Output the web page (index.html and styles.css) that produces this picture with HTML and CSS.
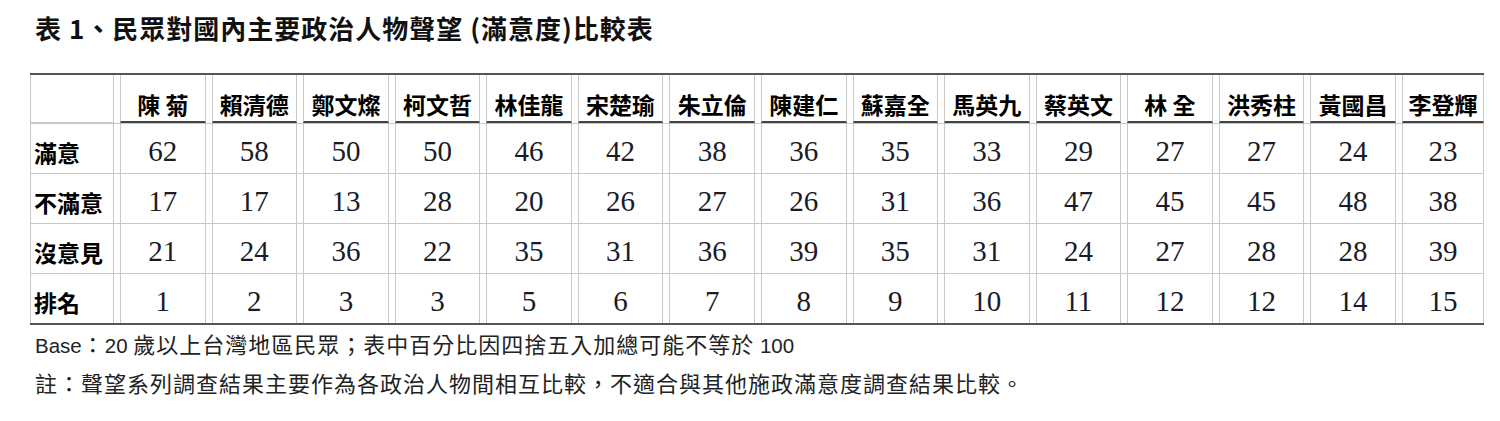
FILE: index.html
```html
<!DOCTYPE html>
<html lang="zh-Hant">
<head>
<meta charset="utf-8">
<title>民眾對國內主要政治人物聲望比較表</title>
<link rel="stylesheet" href="styles.css">
</head>
<body>
<div class="page">
  <h1 class="title">表 1、民眾對國內主要政治人物聲望 (滿意度)比較表</h1>
  <div class="tbl">
    <div class="row head">
      <div class="c lab"></div>
      <div class="c name">陳 菊</div>
      <div class="c name">賴清德</div>
      <div class="c name">鄭文燦</div>
      <div class="c name">柯文哲</div>
      <div class="c name">林佳龍</div>
      <div class="c name">宋楚瑜</div>
      <div class="c name">朱立倫</div>
      <div class="c name">陳建仁</div>
      <div class="c name">蘇嘉全</div>
      <div class="c name">馬英九</div>
      <div class="c name">蔡英文</div>
      <div class="c name">林 全</div>
      <div class="c name">洪秀柱</div>
      <div class="c name">黃國昌</div>
      <div class="c name">李登輝</div>
    </div>
    <div class="row data">
      <div class="c lab">滿意</div>
      <div class="c num">62</div><div class="c num">58</div><div class="c num">50</div><div class="c num">50</div><div class="c num">46</div>
      <div class="c num">42</div><div class="c num">38</div><div class="c num">36</div><div class="c num">35</div><div class="c num">33</div>
      <div class="c num">29</div><div class="c num">27</div><div class="c num">27</div><div class="c num">24</div><div class="c num">23</div>
    </div>
    <div class="row data">
      <div class="c lab">不滿意</div>
      <div class="c num">17</div><div class="c num">17</div><div class="c num">13</div><div class="c num">28</div><div class="c num">20</div>
      <div class="c num">26</div><div class="c num">27</div><div class="c num">26</div><div class="c num">31</div><div class="c num">36</div>
      <div class="c num">47</div><div class="c num">45</div><div class="c num">45</div><div class="c num">48</div><div class="c num">38</div>
    </div>
    <div class="row data">
      <div class="c lab">沒意見</div>
      <div class="c num">21</div><div class="c num">24</div><div class="c num">36</div><div class="c num">22</div><div class="c num">35</div>
      <div class="c num">31</div><div class="c num">36</div><div class="c num">39</div><div class="c num">35</div><div class="c num">31</div>
      <div class="c num">24</div><div class="c num">27</div><div class="c num">28</div><div class="c num">28</div><div class="c num">39</div>
    </div>
    <div class="row data">
      <div class="c lab">排名</div>
      <div class="c num">1</div><div class="c num">2</div><div class="c num">3</div><div class="c num">3</div><div class="c num">5</div>
      <div class="c num">6</div><div class="c num">7</div><div class="c num">8</div><div class="c num">9</div><div class="c num">10</div>
      <div class="c num">11</div><div class="c num">12</div><div class="c num">12</div><div class="c num">14</div><div class="c num">15</div>
    </div>
  </div>
  <div class="notes">
    <p class="note"><span class="lat">Base</span>：<span class="lat">20 </span>歲以上台灣地區民眾；表中百分比因四捨五入加總可能不等於<span class="lat"> 100</span></p>
    <p class="note">註：聲望系列調查結果主要作為各政治人物間相互比較，不適合與其他施政滿意度調查結果比較。</p>
  </div>
</div>
</body>
</html>
```

FILE: styles.css
```css
html, body {
  margin: 0;
  padding: 0;
  background: #ffffff;
}

.page {
  padding: 15px 0 0 30px;
  font-family: "Noto Sans CJK TC", "Noto Sans", sans-serif;
  color: #111111;
}

.title {
  margin: 0 0 32px 5px;
  font-size: 26px;
  line-height: 26px;
  font-weight: 700;
  letter-spacing: 1px;
}

.tbl {
  width: 1454px;
  border-top: 2px solid #555555;
  border-bottom: 2px solid #555555;
}

.row {
  display: grid;
  grid-template-columns: 84px repeat(14, 85.57px) 82px;
  column-gap: 6px;
  box-sizing: border-box;
}

.row.head {
  height: 48px;
}

.row.data {
  height: 50px;
  border-top: 1px solid #c8c8c8;
}

.c {
  box-sizing: border-box;
  border-left: 1px solid #c8c8c8;
  border-right: 1px solid #c8c8c8;
  display: flex;
  align-items: flex-start;
}

.head .lab {
  border-bottom: 1px solid #c8c8c8;
}

.name {
  justify-content: center;
  padding-top: 18px;
  font-size: 23px;
  line-height: 1;
  font-weight: 700;
  color: #000000;
  border-bottom: 2px solid #444444;
  white-space: pre;
}

.data .lab {
  padding: 17px 0 0 3px;
  font-size: 23px;
  line-height: 1;
  font-weight: 700;
  color: #000000;
  white-space: nowrap;
}

.num {
  justify-content: center;
  padding-top: 13px;
  font-family: "Liberation Serif", "DejaVu Serif", serif;
  font-size: 29px;
  line-height: 1;
  color: #1a1a28;
}

.notes {
  padding-left: 5px;
}

.note {
  margin: 0;
  font-size: 22px;
  line-height: 36px;
  letter-spacing: 1px;
  color: #222222;
  font-weight: 400;
}

.lat {
  font-family: "Liberation Sans", "Noto Sans", sans-serif;
  font-size: 20.5px;
  letter-spacing: 0;
  white-space: pre;
}
```
